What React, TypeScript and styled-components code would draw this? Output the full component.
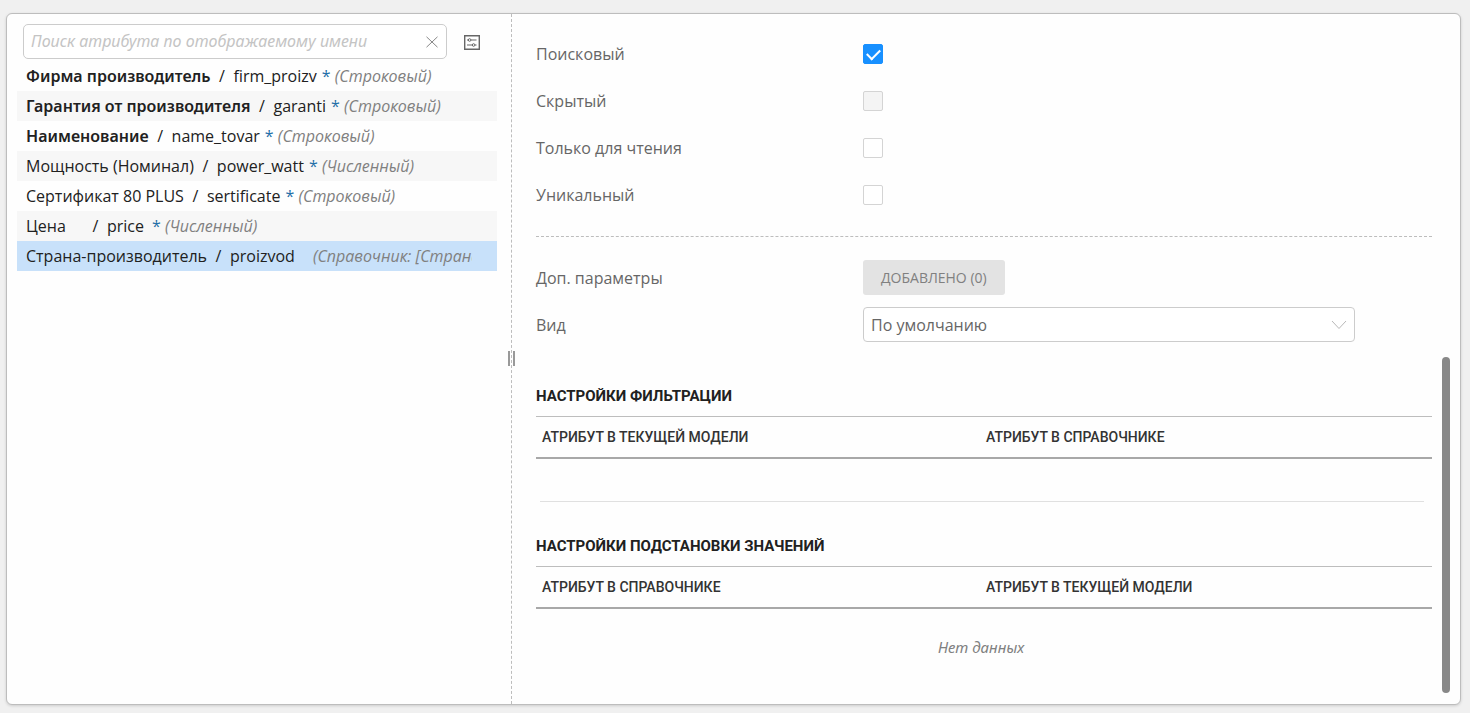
import { useState } from 'react';
import styled, { createGlobalStyle } from 'styled-components';

const GlobalStyle = createGlobalStyle`
  * { box-sizing: border-box; }
  body {
    margin: 0;
    background: #f0f0f0;
    color: #212121;
    font: 16px/24px "Open Sans", sans-serif;
  }
  button, input, select { font: inherit; color: inherit; margin: 0; }
`;

const Page = styled.main`
  display: flex;
  height: 100vh;
  min-height: 640px;
  padding: 13px 9px 8px 6px;
`;

const Card = styled.div`
  display: flex;
  flex: 1;
  min-width: 0;
  background: #fefefe;
  border: 1px solid #bdbdbd;
  border-radius: 6px;
  box-shadow: 0 1px 3px rgba(0, 0, 0, 0.15);
`;

const ListPane = styled.section`
  position: relative;
  flex: 0 0 505px;
  min-width: 0;
  padding: 10px 14px 0 10px;
  border-right: 1px dashed #bdbdbd;
`;

const SearchBar = styled.div`
  display: flex;
  align-items: center;
  gap: 17px;
  padding: 0 17px 0 6px;
`;

const SearchBox = styled.div`
  display: flex;
  flex: 1;
  align-items: center;
  height: 35px;
  padding: 0 7px;
  border: 1px solid #cccccc;
  border-radius: 5px;
  background: #ffffff;
`;

const SearchInput = styled.input`
  flex: 1;
  min-width: 0;
  padding: 0 0 1px;
  border: 0;
  outline: 0;
  background: none;
  &::placeholder {
    color: #c4c4c4;
    font-family: "Noto Sans", sans-serif;
    font-style: italic;
    opacity: 1;
  }
`;

const IconButton = styled.button`
  display: flex;
  padding: 0;
  border: 0;
  background: none;
  color: #666666;
  cursor: pointer;
`;

const AttributeList = styled.ul`
  margin: 2px 0 0;
  padding: 0;
  list-style: none;
`;

const AttributeRow = styled.li<{ $selected: boolean }>`
  &:nth-child(even) { background: #f7f7f7; }
  && { ${p => p.$selected && 'background: #c8e1fa;'} }
`;

const AttributeButton = styled.button`
  display: block;
  width: 100%;
  height: 30px;
  padding: 0 25px 0 9px;
  border: 0;
  background: none;
  text-align: left;
  cursor: pointer;
`;

const AttributeText = styled.span`
  display: flex;
  overflow: hidden;
  white-space: nowrap;
  > * { flex: none; }
`;

const Title = styled.span<{ $bold?: boolean }>`
  min-width: 58px;
  font-family: ${p => (p.$bold ? '"Noto Sans"' : '"Open Sans"')}, sans-serif;
  font-weight: ${p => (p.$bold ? 600 : 400)};
`;

const Slash = styled.span`
  width: 23px;
  text-align: center;
`;

const Code = styled.span`
  min-width: 40px;
`;

const Required = styled.span`
  width: 18px;
  padding-left: 5px;
  color: #1f6fa8;
`;

const Kind = styled.em`
  color: #808080;
`;

const Handle = styled.div`
  position: absolute;
  top: 50%;
  right: -4px;
  width: 7px;
  height: 15px;
  margin-top: -8px;
  border: solid #999999;
  border-width: 0 2px;
  cursor: col-resize;
`;

const DetailPane = styled.section`
  flex: 1;
  min-width: 0;
  padding: 16px 10px 0 24px;
  color: #666666;
`;

const Field = styled.div`
  display: grid;
  grid-template-columns: 327px minmax(0, 1fr);
  align-items: center;
  height: 47px;
  padding-right: 77px;
`;

const CheckInput = styled.input`
  display: grid;
  place-items: center;
  width: 20px;
  height: 20px;
  appearance: none;
  border: 1px solid #d4d4d4;
  border-radius: 2px;
  background: #ffffff;
  &:disabled { background: #f4f4f4; }
  &:checked { border-color: #1890ff; background: #1890ff; }
  &:checked::after {
    content: "";
    width: 11px;
    height: 6px;
    border: solid #ffffff;
    border-width: 0 0 2px 2px;
    transform: translateY(-1px) rotate(-45deg);
  }
`;

const Divider = styled.hr`
  margin: 18px 0 17px;
  border: 0;
  border-top: 1px dashed #bdbdbd;
`;

const AddedButton = styled.button`
  justify-self: start;
  height: 35px;
  padding: 0 18px;
  border: 0;
  border-radius: 3px;
  background: #e3e3e3;
  color: #808080;
  font-size: 14px;
`;

const SelectBox = styled.div`
  display: grid;
  align-items: center;
  > * { grid-area: 1 / 1; }
  > svg { justify-self: end; margin-right: 7px; pointer-events: none; }
`;

const Select = styled.select`
  width: 100%;
  height: 35px;
  padding: 0 30px 0 7px;
  appearance: none;
  border: 1px solid #cccccc;
  border-radius: 4px;
  background: #ffffff;
`;

const Heading = styled.h2`
  margin: 36px 0 8px;
  color: #212121;
  font: 700 15px/24px Roboto, sans-serif;
`;

const Table = styled.table`
  width: 100%;
  border-collapse: separate;
  border-spacing: 0;
  table-layout: fixed;
`;

const HeadCell = styled.th`
  height: 43px;
  padding: 0 6px;
  border-top: 1px solid #bdbdbd;
  border-bottom: 2px solid #a8a8a8;
  color: #333333;
  font: 500 14px/24px Roboto, sans-serif;
  text-align: left;
  &:last-child { padding-left: 2px; }
`;

const EmptyCell = styled.td`
  height: 75px;
  padding: 0 6px 0 0;
  color: #808080;
  font: italic 15px/24px "Noto Sans", sans-serif;
  text-align: center;
`;

const SectionLine = styled.hr`
  margin: 42px 8px 0 4px;
  border: 0;
  border-top: 1px solid #e0e0e0;
  & + ${Heading} { margin-top: 32px; }
`;

const ScrollTrack = styled.div`
  display: flex;
  flex: 0 0 18px;
  flex-direction: column;
  justify-content: flex-end;
  padding: 11px 10px 11px 0;
`;

const ScrollThumb = styled.div`
  height: calc(50% + 2px);
  border-radius: 4px;
  background: #888888;
`;

const attributes = [
  { title: 'Фирма производитель', code: 'firm_proizv', kind: 'Строковый', bold: true, required: true },
  { title: 'Гарантия от производителя', code: 'garanti', kind: 'Строковый', bold: true, required: true },
  { title: 'Наименование', code: 'name_tovar', kind: 'Строковый', bold: true, required: true },
  { title: 'Мощность (Номинал)', code: 'power_watt', kind: 'Численный', required: true },
  { title: 'Сертификат 80 PLUS', code: 'sertificate', kind: 'Строковый', required: true },
  { title: 'Цена', code: 'price', kind: 'Численный', required: true },
  { title: 'Страна-производитель', code: 'proizvod', kind: 'Справочник: [Страна]' },
];

const flags = [
  { id: 'searchable', label: 'Поисковый', checked: true },
  { id: 'hidden', label: 'Скрытый', disabled: true },
  { id: 'readonly', label: 'Только для чтения' },
  { id: 'unique', label: 'Уникальный' },
];

const CloseIcon = () => (
  <svg width="14" height="14" viewBox="0 0 14 14" fill="none" stroke="#888888">
    <path d="M1.5 1.800 12.5 12.200M12.5 1.800 1.5 12.200" />
  </svg>
);

const SettingsIcon = () => (
  <svg width="16" height="19" viewBox="0 0 16 19" fill="none" stroke="currentColor">
    <path d="M.7 3.700h14.600v13.600H.7z" strokeWidth="1.400" />
    <path d="M3 8h1.300M7 8h5.500M3 13h5.300M11 13h1.500" strokeWidth="1.200" />
    <circle cx="5.600" cy="8" r="1.300" />
    <circle cx="9.600" cy="13" r="1.300" />
  </svg>
);

const ChevronIcon = () => (
  <svg width="18" height="12" viewBox="0 0 18 12" fill="none" stroke="#b8b8b8">
    <path d="M2 2l7 7.500L16 2" />
  </svg>
);

export default function App() {
  const [selected, setSelected] = useState('proizvod');
  return (
    <Page>
      <GlobalStyle />
      <Card>
        <ListPane>
          <SearchBar>
            <SearchBox>
              <SearchInput
                aria-label="Поиск атрибута"
                placeholder="Поиск атрибута по отображаемому имени"
              />
              <IconButton aria-label="Очистить"><CloseIcon /></IconButton>
            </SearchBox>
            <IconButton aria-label="Настройки"><SettingsIcon /></IconButton>
          </SearchBar>
          <AttributeList>
            {attributes.map(a => (
              <AttributeRow key={a.code} $selected={a.code === selected}>
                <AttributeButton onClick={() => setSelected(a.code)}>
                  <AttributeText>
                    <Title $bold={a.bold}>{a.title}</Title>
                    <Slash>/</Slash>
                    <Code>{a.code}</Code>
                    <Required>{a.required && '*'}</Required>
                    <Kind>({a.kind})</Kind>
                  </AttributeText>
                </AttributeButton>
              </AttributeRow>
            ))}
          </AttributeList>
          <Handle />
        </ListPane>
        <DetailPane>
          {flags.map(f => (
            <Field key={f.id}>
              <label htmlFor={f.id}>{f.label}</label>
              <CheckInput id={f.id} type="checkbox" defaultChecked={f.checked} disabled={f.disabled} />
            </Field>
          ))}
          <Divider />
          <Field>
            <span id="params">Доп. параметры</span>
            <AddedButton aria-describedby="params">ДОБАВЛЕНО (0)</AddedButton>
          </Field>
          <Field>
            <label htmlFor="view">Вид</label>
            <SelectBox>
              <Select id="view"><option>По умолчанию</option></Select>
              <ChevronIcon />
            </SelectBox>
          </Field>
          <Heading>НАСТРОЙКИ ФИЛЬТРАЦИИ</Heading>
          <Table>
            <thead>
              <tr>
                <HeadCell>АТРИБУТ В ТЕКУЩЕЙ МОДЕЛИ</HeadCell>
                <HeadCell>АТРИБУТ В СПРАВОЧНИКЕ</HeadCell>
              </tr>
            </thead>
          </Table>
          <SectionLine />
          <Heading>НАСТРОЙКИ ПОДСТАНОВКИ ЗНАЧЕНИЙ</Heading>
          <Table>
            <thead>
              <tr>
                <HeadCell>АТРИБУТ В СПРАВОЧНИКЕ</HeadCell>
                <HeadCell>АТРИБУТ В ТЕКУЩЕЙ МОДЕЛИ</HeadCell>
              </tr>
            </thead>
            <tbody>
              <tr><EmptyCell colSpan={2}>Нет данных</EmptyCell></tr>
            </tbody>
          </Table>
        </DetailPane>
        <ScrollTrack><ScrollThumb /></ScrollTrack>
      </Card>
    </Page>
  );
}
